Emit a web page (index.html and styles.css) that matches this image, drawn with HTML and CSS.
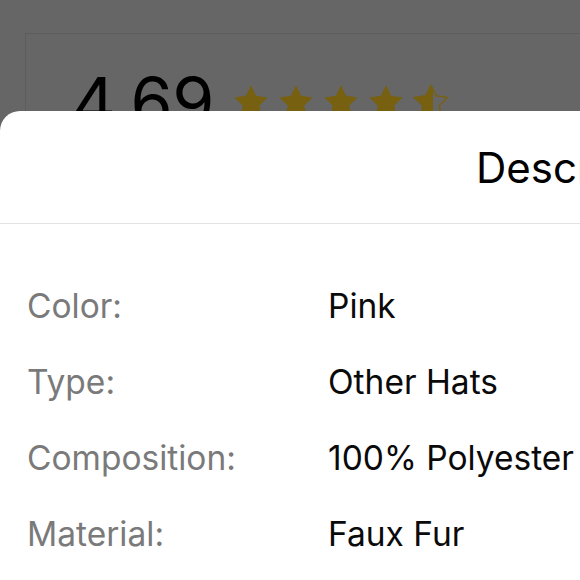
FILE: index.html
```html
<!DOCTYPE html>
<html lang="en">
<head>
<meta charset="utf-8">
<title>Description</title>
<link rel="stylesheet" href="styles.css">
</head>
<body>
<div class="screen">
  <div class="backdrop">
    <div class="rating-card">
      <div class="rating-row">
        <span class="score">4.69</span>
        <div class="stars">
          <svg class="star" viewBox="0 0 24 24"><path d="M12 2l3.09 6.26L22 9.27l-5 4.87 1.18 6.88L12 17.77l-6.18 3.25L7 14.14 2 9.27l6.91-1.01L12 2z"/></svg>
          <svg class="star" viewBox="0 0 24 24"><path d="M12 2l3.09 6.26L22 9.27l-5 4.87 1.18 6.88L12 17.77l-6.18 3.25L7 14.14 2 9.27l6.91-1.01L12 2z"/></svg>
          <svg class="star" viewBox="0 0 24 24"><path d="M12 2l3.09 6.26L22 9.27l-5 4.87 1.18 6.88L12 17.77l-6.18 3.25L7 14.14 2 9.27l6.91-1.01L12 2z"/></svg>
          <svg class="star" viewBox="0 0 24 24"><path d="M12 2l3.09 6.26L22 9.27l-5 4.87 1.18 6.88L12 17.77l-6.18 3.25L7 14.14 2 9.27l6.91-1.01L12 2z"/></svg>
          <svg class="star" viewBox="0 0 24 24">
            <defs><linearGradient id="half" x1="0" x2="1" y1="0" y2="0"><stop offset="0.55" stop-color="#77600f"/><stop offset="0.55" stop-color="#77600f" stop-opacity="0"/></linearGradient></defs>
            <path class="half" d="M12 2l3.09 6.26L22 9.27l-5 4.87 1.18 6.88L12 17.77l-6.18 3.25L7 14.14 2 9.27l6.91-1.01L12 2z"/>
          </svg>
        </div>
      </div>
    </div>
  </div>

  <div class="sheet">
    <div class="sheet-header">
      <h1 class="sheet-title">Description</h1>
    </div>
    <dl class="specs">
      <dt>Color:</dt><dd>Pink</dd>
      <dt>Type:</dt><dd>Other Hats</dd>
      <dt>Composition:</dt><dd>100% Polyester</dd>
      <dt>Material:</dt><dd>Faux Fur</dd>
    </dl>
  </div>
</div>
</body>
</html>
```
FILE: styles.css
```css
* { box-sizing: border-box; }
html, body {
  margin: 0;
  padding: 0;
  width: 580px;
  height: 580px;
  overflow: hidden;
  background: #666666;
  font-family: Inter, "Liberation Sans", sans-serif;
}
.screen {
  position: relative;
  width: 580px;
  height: 580px;
  overflow: hidden;
}
.backdrop {
  padding: 33px 0 0 25px;
}
.rating-card {
  width: 700px;
  height: 300px;
  border: 1px solid #5d5d5d;
  padding: 33px 0 0 46px;
}
.rating-row {
  display: flex;
  align-items: flex-start;
  gap: 17px;
}
.score {
  font-size: 68px;
  line-height: 68px;
  color: #000;
  letter-spacing: -0.5px;
}
.stars {
  display: flex;
  gap: 5px;
  margin-top: 15px;
}
.star {
  width: 40px;
  height: 40px;
  fill: #77600f;
}
.star .half {
  fill: url(#half);
  stroke: #77600f;
  stroke-width: 0.8;
}
.sheet {
  position: absolute;
  left: 0;
  top: 111px;
  width: 700px;
  height: 600px;
  background: #ffffff;
  border-radius: 20px 0 0 0;
}
.sheet-header {
  height: 113px;
  display: flex;
  align-items: center;
  padding-left: 476px;
  border-bottom: 1px solid #e3e3e3;
}
.sheet-title {
  margin: 0;
  font-size: 42px;
  font-weight: 400;
  color: #000;
  white-space: nowrap;
}
.specs {
  margin: 0;
  padding: 44px 0 0 27px;
  display: grid;
  grid-template-columns: 301px auto;
  grid-auto-rows: 76px;
  font-size: 33.5px;
  line-height: 76px;
}
.specs dt {
  color: #7a7a7a;
  white-space: nowrap;
}
.specs dd {
  margin: 0;
  color: #0a0a0a;
  white-space: nowrap;
}
```
